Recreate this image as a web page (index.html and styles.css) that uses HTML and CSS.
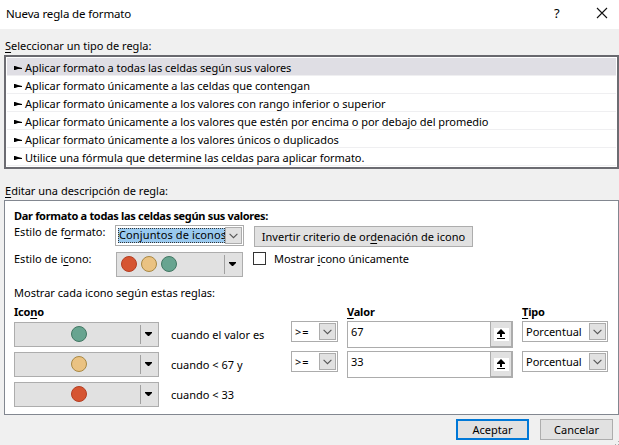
FILE: index.html
```html
<!DOCTYPE html>
<html lang="es">
<head>
<meta charset="utf-8">
<title>Nueva regla de formato</title>
<link rel="stylesheet" href="styles.css">
</head>
<body>
<svg class="defs" width="0" height="0"><defs>
<symbol id="chev" viewBox="0 0 9 6"><path d="M.6.8 4.5 4.7 8.4.8" fill="none" stroke="#555" stroke-width="1.1"/></symbol>
<symbol id="tri" viewBox="0 0 7 4"><path d="M0 0H7V1L4 4H3L0 1Z"/></symbol>
<symbol id="up" viewBox="0 0 15 13"><path d="M3 5 7 1 11 5V6H8V9H6V6H3ZM3 10H11V11H3Z"/></symbol>
<symbol id="mark" viewBox="0 0 9 5"><path d="M0 0H1L4 1 8 2V3H4L1 4H0Z"/></symbol>
</defs></svg>
<header class="titlebar">
  <h1>Nueva regla de formato</h1>
  <span class="help">?</span>
  <svg class="close" width="12" height="12" viewBox="0 0 12 12"><path d="M1 1 11 11M11 1 1 11" fill="none" stroke="#111" stroke-width="1.1"/></svg>
</header>
<main>
  <p class="caption"><span><u>S</u>eleccionar un tipo de regla:</span></p>
  <ul class="rules">
    <li class="on"><svg width="9" height="5"><use href="#mark"/></svg><span>Aplicar formato a todas las celdas según sus valores</span></li>
    <li><svg width="9" height="5"><use href="#mark"/></svg><span>Aplicar formato únicamente a las celdas que contengan</span></li>
    <li><svg width="9" height="5"><use href="#mark"/></svg><span>Aplicar formato únicamente a los valores con rango inferior o superior</span></li>
    <li><svg width="9" height="5"><use href="#mark"/></svg><span>Aplicar formato únicamente a los valores que estén por encima o por debajo del promedio</span></li>
    <li><svg width="9" height="5"><use href="#mark"/></svg><span>Aplicar formato únicamente a los valores únicos o duplicados</span></li>
    <li><svg width="9" height="5"><use href="#mark"/></svg><span>Utilice una fórmula que determine las celdas para aplicar formato.</span></li>
  </ul>
  <p class="caption edit"><span><u>E</u>ditar una descripción de regla:</span></p>
  <section class="panel">
    <h2>Dar formato a todas las celdas según sus valores:</h2>
    <div class="style-row">
      <label>Estilo de f<u>o</u>rmato:</label>
      <div class="select format"><span class="chosen">Conjuntos de iconos</span><i><svg width="9" height="6"><use href="#chev"/></svg></i></div>
      <button class="invert">Invertir criterio de or<u>d</u>enación de icono</button>
    </div>
    <div class="style-row icons">
      <label>Estilo de i<u>c</u>ono:</label>
      <div class="picker set"><div class="dots"><b class="red"></b><b class="yellow"></b><b class="green"></b></div><i><svg width="7" height="4"><use href="#tri"/></svg></i></div>
      <span class="check"></span><span class="checktext">Mostrar <u>i</u>cono únicamente</span>
    </div>
    <p class="intro">Mostrar cada icono según estas reglas:</p>
    <div class="grid heads"><strong>Ico<u>n</u>o</strong><strong class="hv"><u>V</u>alor</strong><strong class="ht"><u>T</u>ipo</strong></div>
    <div class="grid">
      <div class="picker"><div class="dots"><b class="green"></b></div><i><svg width="7" height="4"><use href="#tri"/></svg></i></div>
      <span class="when">cuando el valor es</span>
      <div class="select op"><span>&gt;=</span><i><svg width="9" height="6"><use href="#chev"/></svg></i></div>
      <div class="value"><span>67</span><i><svg width="15" height="13"><use href="#up"/></svg></i></div>
      <div class="select type"><span>Porcentual</span><i><svg width="9" height="6"><use href="#chev"/></svg></i></div>
    </div>
    <div class="grid">
      <div class="picker"><div class="dots"><b class="yellow"></b></div><i><svg width="7" height="4"><use href="#tri"/></svg></i></div>
      <span class="when">cuando &lt; 67 y</span>
      <div class="select op"><span>&gt;=</span><i><svg width="9" height="6"><use href="#chev"/></svg></i></div>
      <div class="value"><span>33</span><i><svg width="15" height="13"><use href="#up"/></svg></i></div>
      <div class="select type"><span>Porcentual</span><i><svg width="9" height="6"><use href="#chev"/></svg></i></div>
    </div>
    <div class="grid">
      <div class="picker"><div class="dots"><b class="red"></b></div><i><svg width="7" height="4"><use href="#tri"/></svg></i></div>
      <span class="when">cuando &lt; 33</span>
    </div>
  </section>
  <footer><button class="ok">Aceptar</button><button>Cancelar</button></footer>
</main>
<svg class="grip" width="4" height="4" viewBox="0 0 4 4"><path d="M3 0h1v1H3ZM0 3h1v1H0ZM3 3h1v1H3Z" fill="#aaa"/></svg>
</body>
</html>
```
FILE: styles.css
```css
* { box-sizing: border-box; margin: 0; padding: 0; }
body { width: 619px; height: 445px; overflow: hidden; background: #f0f0f0; color: #000; font: 11px/16px "Noto Sans", "Open Sans", sans-serif; }
.defs { position: absolute; }
svg { display: block; flex: none; }
u { text-decoration: underline; text-decoration-thickness: 1px; text-underline-offset: 2px; text-decoration-skip-ink: none; }
span, label, p { white-space: nowrap; }
.titlebar { height: 29px; background: #fff; display: flex; align-items: center; padding: 0 11px 3px 6px; }
h1 { font-size: 11.5px; letter-spacing: -.15px; font-weight: 400; flex: 1; padding-top: 2px; }
.help { width: 8px; margin-right: 34px; font-size: 13px; }
.caption { height: 26px; padding: 9px 0 0 5px; }
.rules { list-style: none; height: 114px; margin-left: 4px; border: 2px solid #6c6c72; border-top-color: #68686e; background: #fff; padding: 1px; letter-spacing: -.04px; }
.rules li { height: 18px; border-bottom: 1px solid #efeff1; display: flex; align-items: center; padding-left: 7px; gap: 2px; }
.rules li span { padding-top: 2px; }
.rules li svg { margin-top: 3px; }
.rules .on { background: #dfdee4; }
.edit { height: 31px; padding-top: 14px; }
.panel { height: 215px; margin-left: 4px; border: 1px solid #828790; background: #fff; padding: 7px 9px 0; }
h2 { font-size: 11px; line-height: 16px; height: 17px; white-space: nowrap; letter-spacing: -.31px; }
.style-row { display: flex; height: 27px; align-items: flex-start; }
.style-row label { width: 101px; line-height: 14px; }
.select { height: 21px; border: 1px solid #acacac; background: #fff; display: flex; padding: 1px; }
.select span { flex: 1; min-width: 0; line-height: 17px; padding-left: 2px; }
.select i { width: 17px; border: 1px solid #acacac; background: #e1e1e1; display: grid; place-items: center; }
.format { width: 129px; }
.select .chosen { background: #99c9ef; outline: 1px dotted #333; outline-offset: -1px; padding-left: 1px; margin: 1px 0 1px 1px; line-height: 14px; overflow: hidden; letter-spacing: .12px; }
button { font: inherit; color: inherit; height: 21px; background: #e1e1e1; border: 1px solid #adadad; white-space: nowrap; display: flex; align-items: center; justify-content: center; padding-top: 1px; }
.invert { width: 219px; margin: 1px 0 0 10px; letter-spacing: .03px; }
.icons label { line-height: 13px; }
.picker { height: 25px; border: 1px solid #adadad; background: #e1e1e1; display: flex; }
.set { width: 127px; margin-left: 1px; }
.icons { height: 33px; }
.dots { flex: 1; display: flex; justify-content: center; gap: 4px; padding: 3px 0 0 2px; }
.set .dots { justify-content: flex-start; padding-left: 4px; }
.dots b { width: 16px; height: 16px; border-radius: 50%; border: 1px solid; }
.red { background: #d65532; border-color: #b43e22 !important; }
.yellow { background: #eac282; border-color: #a98843 !important; }
.green { background: #68a490; border-color: #427763 !important; }
.picker i { width: 18px; height: 19px; margin-top: 2px; border-left: 1px solid #a0a0a0; padding: 7px 0 0 4px; }
.check { width: 13px; height: 13px; border: 1px solid #333; margin: 0 8px 0 10px; }
.checktext { line-height: 14px; letter-spacing: -.05px; }
.intro { height: 19px; line-height: 15px; }
.grid { display: grid; grid-template-columns: 145px 12px 120px 47px 9px 166px 9px 86px; height: 30px; align-items: start; }
.grid > .picker { grid-column: 1; margin-top: 1px; }
.when { grid-column: 3; padding-top: 6px; }
.op { grid-column: 4; }
.op span { letter-spacing: 1px; }
.value { grid-column: 6; height: 27px; border: 1px solid #acacac; display: flex; }
.value span { flex: 1; padding: 2px 0 0 3px; }
.value i { width: 22px; border: 1px solid #acacac; border-width: 0 1px 1px 1px; background: #e1e1e1; display: grid; place-items: center; }
.value svg { background: #fff; }
.type { grid-column: 8; }
.heads { height: 17px; letter-spacing: -.2px; }
.hv { grid-column: 6; }
.ht { grid-column: 8; }
footer { display: flex; justify-content: flex-end; gap: 11px; padding: 4px 6px 0 0; }
footer button { width: 73px; }
.ok { border: 2px solid #0078d7; }
.grip { position: absolute; right: 0; bottom: 0; }
```
